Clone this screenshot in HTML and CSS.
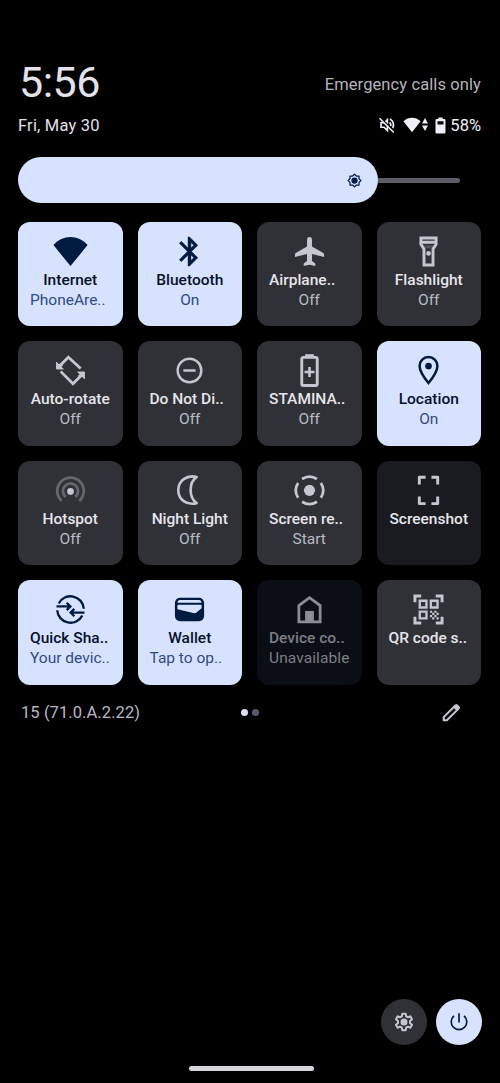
FILE: index.html
```html
<!DOCTYPE html>
<html lang="en">
<head>
<meta charset="utf-8">
<title>Quick settings</title>
<link rel="stylesheet" href="styles.css">
</head>
<body>
<main class="screen">
  <header class="top">
    <div class="clock">5:56</div>
    <div class="carrier">Emergency calls only</div>
  </header>
  <div class="status">
    <div class="date">Fri, May 30</div>
    <div class="status-icons">
      <svg class="mute" viewBox="0 0 24 24"><g fill="none" stroke="currentColor" stroke-width="2.200"><path d="M2 3l19 19"/><path d="M8 9H4v6h4l4.500 4.500V13M10 7.500l2.500-2.500v5M15.500 8.500c1.500 1.500 2 3 1.500 5M16 4c4.500 2.500 6 8 3.500 12"/></g></svg>
      <svg class="signal" viewBox="0 0 25 16"><path fill="currentColor" d="M9 15.300L.4 4.300C5.500-.3 12.500-.3 17.600 4.300zM22 1l3 5.600h-6zM19 8.400h6L22 14z"/></svg>
      <svg class="battery" viewBox="0 0 10 16"><path fill="currentColor" fill-rule="evenodd" d="M3 .5h4v1.300h1.500a1.200 1.200 0 0 1 1.200 1.200v11.300a1.200 1.200 0 0 1-1.200 1.200h-7a1.200 1.200 0 0 1-1.200-1.200V3a1.200 1.200 0 0 1 1.200-1.200H3zM2.200 4v3h5.600V4z"/></svg>
      <span class="percent">58%</span>
    </div>
  </div>
  <div class="brightness">
    <div class="level">
      <svg class="sun" viewBox="0 0 24 24"><path fill="none" stroke="currentColor" stroke-width="2" stroke-linejoin="round" d="M12 1.800l3 3h4.200V9l3 3-3 3v4.200H15l-3 3-3-3H4.800V15l-3-3 3-3V4.800H9z"/><circle cx="12" cy="12" r="5" fill="currentColor"/></svg>
    </div>
    <div class="track"></div>
  </div>
  <section class="tiles">
    <div class="tile on">
      <svg class="icon" viewBox="0 0 24 24"><path fill="currentColor" d="M12 22L.3 7.600C6.500.2 17.500.2 23.700 7.600z"/></svg>
      <div class="label">Internet</div><div class="sub cut">PhoneAre..</div>
    </div>
    <div class="tile on">
      <svg class="icon" viewBox="0 0 24 24"><path fill="currentColor" stroke="currentColor" stroke-width=".3" d="M17.710 7.710L12 2h-1v7.590L6.410 5 5 6.410 10.590 12 5 17.590 6.410 19 11 14.410V22h1l5.710-5.710-4.300-4.290 4.300-4.290zM13 5.830l1.880 1.880L13 9.590V5.830zm1.880 10.460L13 18.170v-3.760l1.880 1.880z"/></svg>
      <div class="label">Bluetooth</div><div class="sub">On</div>
    </div>
    <div class="tile">
      <svg class="icon" viewBox="0 0 24 24"><path fill="currentColor" d="M22 14.200v1.500l-8.300-2v4.800l1.900 1.400c.3.300.4.600.4 1v1L12 21l-4 .9v-1c0-.4.100-.7.400-1l1.900-1.400v-4.800l-8.300 2v-1.500c0-.6.300-1 .8-1.300l7.500-4.300V3.800a1.700 1.700 0 0 1 3.400 0v4.800l7.500 4.300c.5.300.8.700.8 1.300z"/></svg>
      <div class="label cut">Airplane..</div><div class="sub">Off</div>
    </div>
    <div class="tile">
      <svg class="icon" viewBox="0 0 24 24"><path fill="none" stroke="currentColor" stroke-width="2" d="M6.800 2.700h10.400V7l-2.100 3.200v11.100H8.900V10.200L6.800 7zM6.800 5.700h10.400"/><path d="M8.800 7.800h6.400l-1.500 2h-3.400z" fill="currentColor" opacity=".25"/><circle cx="12" cy="13.300" r="1.600" fill="currentColor"/></svg>
      <div class="label">Flashlight</div><div class="sub">Off</div>
    </div>
    <div class="tile">
      <svg class="icon" viewBox="0 0 24 24"><path fill="none" stroke="currentColor" stroke-width="1.900" d="M19 10.600L10.500 2.900 5.200 8.200M5.200 12.600l8.500 8.500 5.300-5.300"/><path fill="currentColor" d="M2.200 6v5.200h5.200zM21.800 18v-5.200h-5.200z"/><path fill="currentColor" d="M2.200 6v5.200h5.200L5.800 9.500 7 8.200 5.600 6.800 3.900 7.700zM21.800 18v-5.200h-5.200l1.700 1.700-1.300 1.300 1.400 1.400 1.700-1z"/></svg>
      <div class="label">Auto-rotate</div><div class="sub">Off</div>
    </div>
    <div class="tile">
      <svg class="icon" viewBox="0 0 24 24"><g fill="none" stroke="currentColor" stroke-width="1.700"><circle cx="12" cy="12" r="8.100"/><path d="M7.800 12h8.400"/></g></svg>
      <div class="label cut">Do Not Di..</div><div class="sub">Off</div>
    </div>
    <div class="tile">
      <svg class="icon" viewBox="0 0 24 24"><rect x="6.700" y="3" width="10.600" height="19.300" rx="1.200" fill="none" stroke="currentColor" stroke-width="2"/><path fill="currentColor" d="M9 .8h6V3H9zM11.100 9.600h1.800v2.500h2.500v1.800h-2.500v2.500h-1.800v-2.500H8.600v-1.800h2.500z"/></svg>
      <div class="label cut">STAMINA..</div><div class="sub">Off</div>
    </div>
    <div class="tile on">
      <svg class="icon" viewBox="0 0 24 24"><path fill="none" stroke="currentColor" stroke-width="1.700" d="M12 20.600C8 15.700 5.900 12 5.900 8.900a6.100 6.100 0 0 1 12.200 0c0 3.100-2.100 6.800-6.100 11.700z"/><circle cx="12" cy="8.900" r="2.300" fill="currentColor"/></svg>
      <div class="label">Location</div><div class="sub">On</div>
    </div>
    <div class="tile">
      <svg class="icon" viewBox="0 0 24 24"><g fill="none" stroke="currentColor" stroke-width="1.900" opacity=".36"><path d="M6 19.100a9.100 9.100 0 1 1 12 0"/><path d="M8.700 16.400a5.200 5.200 0 1 1 6.600 0"/></g><circle cx="12" cy="12.600" r="2.300" fill="currentColor"/></svg>
      <div class="label">Hotspot</div><div class="sub">Off</div>
    </div>
    <div class="tile">
      <svg class="icon" viewBox="0 0 24 24"><path fill="none" stroke="currentColor" stroke-width="1.800" stroke-linejoin="round" d="M16.900 2.700C10 .9 4.300 5.500 4.300 11.800S10 22.400 16.900 20.700C11.400 16.800 11.400 6.600 16.900 2.700z"/></svg>
      <div class="label">Night Light</div><div class="sub">Off</div>
    </div>
    <div class="tile">
      <svg class="icon" viewBox="0 0 24 24"><circle cx="12" cy="11.900" r="3.800" fill="currentColor"/><g fill="none" stroke="currentColor" stroke-width="1.900"><path d="M6.900 4.100a9.300 9.300 0 0 1 10.200 0M19.800 6.800a9.300 9.300 0 0 1 0 10.200M17.100 19.700a9.300 9.300 0 0 1-10.200 0M4.200 17a9.300 9.300 0 0 1 0-10.200"/></g></svg>
      <div class="label cut">Screen re..</div><div class="sub">Start</div>
    </div>
    <div class="tile idle">
      <svg class="icon" viewBox="0 0 24 24"><path fill="none" stroke="currentColor" stroke-width="2" stroke-linejoin="round" d="M10 2.900H5.700v4.900M14 2.900h4.300v4.900M10 21H5.700v-4.900M14 21h4.300v-4.900"/></svg>
      <div class="label">Screenshot</div>
    </div>
    <div class="tile on">
      <svg class="icon" viewBox="0 0 24 24"><g fill="none" stroke="currentColor" stroke-width="1.600"><path d="M3.900 7.900A9.100 9.100 0 0 1 21.100 11.500M20.100 16.100A9.100 9.100 0 0 1 2.900 12.500"/><path d="M2.400 9.900h9.200M9.400 7.400l2.500 2.500-2.500 2.500M21.600 14.100h-9.200M14.600 11.600l-2.500 2.500 2.500 2.500"/></g></svg>
      <div class="label cut">Quick Sha..</div><div class="sub cut">Your devic..</div>
    </div>
    <div class="tile on">
      <svg class="icon" viewBox="0 0 24 24"><path fill="currentColor" fill-rule="evenodd" d="M5.500 4h13A3.500 3.500 0 0 1 22 7.500v9a3.500 3.500 0 0 1-3.500 3.500h-13A3.500 3.500 0 0 1 2 16.500v-9A3.500 3.500 0 0 1 5.500 4zM3.800 7.300h16.400c0-1.200-.6-1.800-1.600-1.800H5.400c-1 0-1.600.6-1.600 1.800zM3.700 9.400v2.400l11.600 2.800c.5.100.9 0 1.300-.3l3.700-3.100V9.400c0-.3-.3-.6-.7-.6H4.400c-.4 0-.7.3-.7.600z"/></svg>
      <div class="label">Wallet</div><div class="sub cut">Tap to op..</div>
    </div>
    <div class="tile off">
      <svg class="icon" viewBox="0 0 24 24"><path fill="none" stroke="currentColor" stroke-width="1.900" d="M4.700 20.500V9.300L12 3.900l7.300 5.400v11.200z"/><path fill="currentColor" d="M9 13h6v7.500H9z"/></svg>
      <div class="label cut">Device co..</div><div class="sub cut wide">Unavailable</div>
    </div>
    <div class="tile">
      <svg class="icon" viewBox="0 0 24 24"><g fill="none" stroke="currentColor" stroke-width="2"><path d="M2.700 7V2.700H7M17 2.700h4.300V7M2.700 17v4.300H7M17 21.300h4.300V17"/><path stroke-width="1.600" d="M6 6h4.600v4.600H6zM13.600 6h4.600v4.600h-4.600zM6 13.500h4.600v4.600H6z"/></g><path fill="currentColor" d="M13 12.800h1.500v1.500H13zM16 12.800h1.500v1.500H16zM14.500 14.300H16v1.500h-1.500zM17.500 14.300H19v1.500h-1.500zM13 15.800h1.500v1.500H13zM16 15.800h1.500v1.500H16zM14.500 17.300H16v1.500h-1.500zM17.500 17.300H19v1.500h-1.500z"/></svg>
      <div class="label cut">QR code s..</div>
    </div>
  </section>
  <div class="build">
    <span class="version">15 (71.0.A.2.22)</span>
    <div class="dots"><i class="dot active"></i><i class="dot"></i></div>
    <svg class="edit" viewBox="0 0 24 24"><path fill="none" stroke="currentColor" stroke-width="2.200" stroke-linejoin="round" d="M4 20v-3.500L16.500 4l3.500 3.500L7.500 20z"/><path fill="currentColor" d="M14 5.500L17 2.600q1-.8 2 0L21.400 5q.8 1 0 2l-2.900 3z"/></svg>
  </div>
  <footer class="actions">
    <div class="round">
      <svg class="gear" viewBox="0 0 24 24"><path fill="none" stroke="currentColor" stroke-width="2.400" stroke-linejoin="round" d="M10 2h4l.6 3.200 2 1.100 3-1.100 2 3.500-2.400 2.100v2.400l2.400 2.100-2 3.500-3-1.100-2 1.100L14 22h-4l-.6-3.200-2-1.100-3 1.100-2-3.500 2.400-2.100v-2.400L2.400 8.700l2-3.500 3 1.100 2-1.100z"/><circle cx="12" cy="12" r="4.200" fill="currentColor"/></svg>
    </div>
    <div class="round power">
      <svg class="gear" viewBox="0 0 24 24"><path fill="none" stroke="currentColor" stroke-width="2" d="M12 1.500v11M6 4.700a9.300 9.300 0 1 0 12 0"/></svg>
    </div>
  </footer>
  <div class="home-bar"></div>
</main>
</body>
</html>
```
FILE: styles.css
```css
* { box-sizing: border-box; }
body { margin: 0; background: #000; font-family: Roboto, "Liberation Sans", sans-serif; color: #e3e2e9; }
svg { display: block; flex: none; }
.screen { width: 500px; height: 1083px; padding: 59px 18px 0; display: flex; flex-direction: column; background: #000; overflow: hidden; }
.top { height: 46px; display: flex; justify-content: space-between; align-items: center; padding-left: 1px; }
.clock { font-size: 43px; line-height: 46px; letter-spacing: -0.500px; }
.carrier { font-size: 16.500px; letter-spacing: 0.100px; color: #b5b5bf; padding-right: 1px; padding-top: 4px; }
.status { height: 38px; margin-top: 1px; display: flex; justify-content: space-between; align-items: center; }
.date, .percent { font-size: 16.500px; }
.date { letter-spacing: 0.200px; }
.percent { margin-right: 1px; }
.status-icons { display: flex; align-items: center; color: #f0eff7; }
.mute { width: 18px; height: 18px; margin-right: 7px; }
.signal { width: 25px; height: 16px; margin-right: 7px; }
.battery { width: 11px; height: 17px; margin-right: 4px; }
.brightness { height: 46px; margin-top: 13px; display: flex; align-items: center; }
.level { width: 360px; height: 46px; border-radius: 23px; background: #d7e2ff; display: flex; align-items: center; justify-content: flex-end; padding-right: 16px; color: #001a41; }
.sun { width: 15px; height: 15px; }
.track { width: 82px; height: 5px; background: #5d5e67; border-radius: 0 3px 3px 0; }
.tiles { margin-top: 19px; display: grid; grid-template-columns: repeat(4, 104.500px); grid-auto-rows: 104.400px; gap: 15px; }
.tile { border-radius: 12px; background: #303136; color: #c5c6d0; padding: 11.750px 12px 0; display: flex; flex-direction: column; align-items: center; }
.icon { width: 35px; height: 35px; }
.label, .sub { font-size: 15.500px; line-height: 20px; white-space: nowrap; }
.label { font-weight: 500; color: #e6e5eb; margin-top: 1px; }
.sub { color: #b9bac4; }
.cut { align-self: flex-start; }
.wide { letter-spacing: 0.100px; }
.on { background: #d7e2ff; color: #001a41; }
.on .label { color: #06112b; }
.on .sub { color: #2f4b82; }
.idle { background: #1a1b20; }
.off { background: #0c0e15; color: #8b8c96; }
.off .label, .off .sub { color: #7c7d86; }
.build { height: 56px; display: grid; grid-template-columns: 1fr auto 1fr; align-items: center; padding: 0 20px 0 3px; color: #b9b9c2; }
.version { font-size: 16.500px; letter-spacing: 0.080px; }
.dots { display: flex; gap: 4px; transform: translateX(8px); }
.dot { width: 7px; height: 7px; border-radius: 50%; background: #565b69; }
.active { background: #d7e2ff; }
.edit { width: 22px; height: 22px; justify-self: end; color: #c5c6d0; }
.actions { margin-top: 258.500px; padding-right: 0.500px; display: flex; justify-content: flex-end; gap: 9px; }
.round { width: 46px; height: 46px; border-radius: 50%; background: #303136; color: #c5c6d0; display: flex; align-items: center; justify-content: center; }
.power { background: #d7e2ff; color: #001a41; }
.gear { width: 20px; height: 20px; }
.home-bar { width: 125px; height: 5px; border-radius: 3px; background: #d6d6da; margin: 21px auto 0; transform: translateX(1px); }
```
